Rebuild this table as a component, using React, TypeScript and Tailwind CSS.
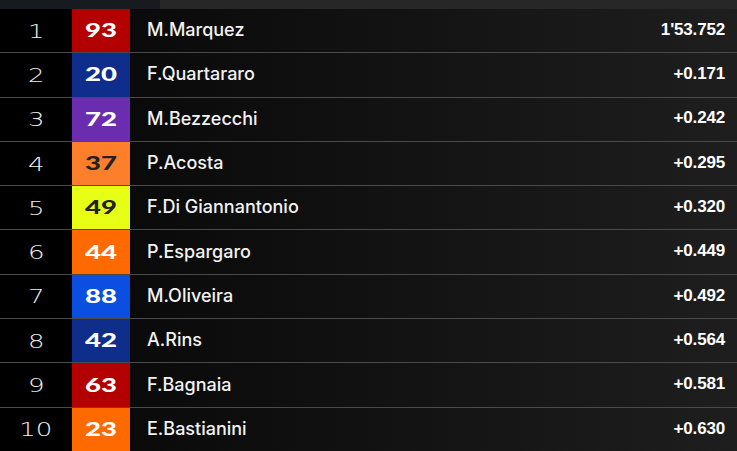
import React from 'react'

type Rider = {
  pos: number
  num: string
  name: string
  time: string
  bg: string
  fg: string
}

const riders: Rider[] = [
  { pos: 1, num: '93', name: 'M.Marquez', time: "1'53.752", bg: 'bg-[#b30000]', fg: 'text-white' },
  { pos: 2, num: '20', name: 'F.Quartararo', time: '+0.171', bg: 'bg-[#0f2d8a]', fg: 'text-white' },
  { pos: 3, num: '72', name: 'M.Bezzecchi', time: '+0.242', bg: 'bg-[#6a2db0]', fg: 'text-white' },
  { pos: 4, num: '37', name: 'P.Acosta', time: '+0.295', bg: 'bg-[#fd7f2c]', fg: 'text-[#222222]' },
  { pos: 5, num: '49', name: 'F.Di Giannantonio', time: '+0.320', bg: 'bg-[#e6ff14]', fg: 'text-[#222222]' },
  { pos: 6, num: '44', name: 'P.Espargaro', time: '+0.449', bg: 'bg-[#ff6a00]', fg: 'text-white' },
  { pos: 7, num: '88', name: 'M.Oliveira', time: '+0.492', bg: 'bg-[#0a4fe0]', fg: 'text-white' },
  { pos: 8, num: '42', name: 'A.Rins', time: '+0.564', bg: 'bg-[#0f2d8a]', fg: 'text-white' },
  { pos: 9, num: '63', name: 'F.Bagnaia', time: '+0.581', bg: 'bg-[#b30000]', fg: 'text-white' },
  { pos: 10, num: '23', name: 'E.Bastianini', time: '+0.630', bg: 'bg-[#ff6a00]', fg: 'text-white' },
]

function Row({ r }: { r: Rider }) {
  return (
    <div className="flex h-[44.3px] border-b border-[#4a4a4a]">
      {/* position */}
      <div className="w-[72px] shrink-0 bg-black flex items-center justify-center">
        <span className="font-['DejaVu_Sans',sans-serif] font-extralight text-[20px] text-[#f0f0f0] scale-x-[1.3] leading-none">
          {r.pos}
        </span>
      </div>
      {/* rider number */}
      <div className={`w-[58px] shrink-0 flex items-center justify-center pb-[2px] ${r.bg}`}>
        <span className={`font-['Lato',sans-serif] font-black text-[19px] scale-x-[1.45] leading-none ${r.fg}`}>
          {r.num}
        </span>
      </div>
      {/* name + time */}
      <div className="flex-1 flex items-center justify-between pl-[17px] pr-[12px] pb-[2px] bg-gradient-to-r from-[#0a0a0a] to-[#1e1e1e]">
        <span className="font-['Inter',sans-serif] font-medium text-[18px] text-[#f2f2f2]">
          {r.name}
        </span>
        <span className="font-['Liberation_Sans',sans-serif] font-bold text-[17px] text-white tracking-[-0.01em]">
          {r.time}
        </span>
      </div>
    </div>
  )
}

export default function App() {
  return (
    <div className="w-[737px] h-[451px] overflow-hidden bg-[#0a0a0a]">
      <div className="h-[9px] flex">
        <div className="w-[160px] bg-[#171b1f]" />
        <div className="flex-1 bg-[#272727]" />
      </div>
      {riders.map((r) => (
        <Row key={r.pos} r={r} />
      ))}
    </div>
  )
}
